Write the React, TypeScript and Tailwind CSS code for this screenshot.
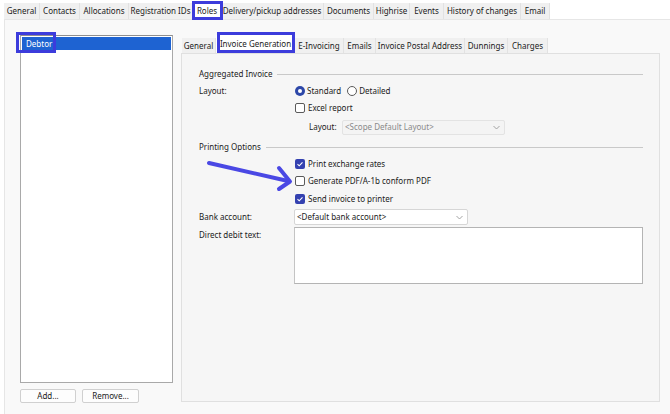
import React from "react";

const topTabs: { label: string; w: number; active?: boolean }[] = [
  { label: "General", w: 36 },
  { label: "Contacts", w: 40 },
  { label: "Allocations", w: 49 },
  { label: "Registration IDs", w: 64 },
  { label: "Roles", w: 28, active: true },
  { label: "Delivery/pickup addresses", w: 103 },
  { label: "Documents", w: 50 },
  { label: "Highrise", w: 36 },
  { label: "Events", w: 34 },
  { label: "History of changes", w: 77 },
  { label: "Email", w: 29 },
];

const innerTabs: { label: string; w: number; active?: boolean }[] = [
  { label: "General", w: 34 },
  { label: "Invoice Generation", w: 79, active: true },
  { label: "E-Invoicing", w: 49 },
  { label: "Emails", w: 32 },
  { label: "Invoice Postal Address", w: 89 },
  { label: "Dunnings", w: 43 },
  { label: "Charges", w: 40 },
];

const Chevron = () => (
  <svg width="7" height="5" viewBox="0 0 7 5" className="shrink-0">
    <polyline points="0.5,1 3.5,4 6.5,1" fill="none" stroke="#9a9a9a" strokeWidth="0.9" />
  </svg>
);

const Checkbox = ({ checked, label }: { checked?: boolean; label: string }) => (
  <div className="flex items-center gap-[3px]">
    {checked ? (
      <span className="w-[10px] h-[10px] rounded-[2px] bg-[#3441b0] flex items-center justify-center">
        <svg width="8" height="8" viewBox="0 0 8 8">
          <polyline points="1.5,4.2 3.2,5.8 6.5,2.3" fill="none" stroke="#fff" strokeWidth="1.1" />
        </svg>
      </span>
    ) : (
      <span className="w-[10px] h-[10px] rounded-[2px] border border-[#5a5a5a] bg-white" />
    )}
    <span>{label}</span>
  </div>
);

const Radio = ({ checked, label }: { checked?: boolean; label: string }) => (
  <div className="flex items-center gap-[2px]">
    {checked ? (
      <span className="w-[10px] h-[10px] rounded-full bg-[#2d47a8] flex items-center justify-center">
        <span className="w-[4px] h-[4px] rounded-full bg-white" />
      </span>
    ) : (
      <span className="w-[10px] h-[10px] rounded-full border border-[#5a5a5a] bg-white" />
    )}
    <span>{label}</span>
  </div>
);

const GroupHeader = ({ label }: { label: string }) => (
  <div className="flex items-center h-[16px]">
    <span>{label}</span>
    <span className="flex-1 h-px bg-[#c9c9c9] ml-[5px]" />
  </div>
);

export default function App() {
  return (
    <div
      className="relative w-[670px] h-[414px] overflow-hidden bg-white text-[8px] text-[#1b1b1b] leading-none"
      style={{ fontFamily: '"Noto Sans", "Open Sans", sans-serif' }}
    >
      {/* top tabs */}
      <div className="flex items-end h-[19px] pl-[4px]">
        {topTabs.map((t) => (
          <div
            key={t.label}
            style={{ width: t.w }}
            className={
              t.active
                ? "relative h-[17px] flex items-center justify-center bg-white"
                : "h-[16px] flex items-center justify-center bg-[#f0f0f0] border-r border-[#e2e2e2]"
            }
          >
            {t.label}
            {t.active && (
              <span className="absolute -left-[1px] -right-[2px] -top-[1px] -bottom-[1px] border-[3px] border-[#3c3cdc]" />
            )}
          </div>
        ))}
      </div>

      {/* main area */}
      <div className="ml-[4px] h-[395px] bg-[#f9f9f9] border-l border-t border-[#e6e6e6] flex">
        {/* left: roles list */}
        <div className="pl-[15px] pt-[15px] flex flex-col">
          <div className="w-[153px] h-[348px] bg-white border border-[#a9a9a9] border-t-[#8f8f8f] pt-px px-px">
            <div className="relative h-[13px] bg-[#1e63d2] text-white flex items-center pl-[4px]">
              Debtor
              <span className="absolute -left-[6px] -top-[5px] w-[40px] h-[21px] border-[3px] border-[#3c3cdc]" />
            </div>
          </div>
          <div className="flex gap-[6px] mt-[6px]">
            <button className="w-[56px] h-[14px] bg-[#fdfdfd] border border-[#d0d0d0] rounded-[2px] flex items-center justify-center">
              Add...
            </button>
            <button className="w-[57px] h-[14px] bg-[#fdfdfd] border border-[#d0d0d0] rounded-[2px] flex items-center justify-center">
              Remove...
            </button>
          </div>
        </div>

        {/* right: role detail */}
        <div className="ml-[8px] pt-[14px] flex flex-col">
          <div className="flex items-end h-[19px] pl-[1px]">
            {innerTabs.map((t) => (
              <div
                key={t.label}
                style={{ width: t.w }}
                className={
                  t.active
                    ? "relative h-[18px] flex items-center justify-center bg-white"
                    : "h-[15px] flex items-center justify-center bg-[#f0f0f0] border-r border-[#e2e2e2]"
                }
              >
                {t.label}
                {t.active && (
                  <span className="absolute left-[1px] right-[0px] -top-[3px] bottom-0 border-[3px] border-[#3c3cdc]" />
                )}
              </div>
            ))}
          </div>

          <div className="w-[479px] h-[349px] bg-[#f6f6f6] border border-[#e0e0e0] pl-[17px] pr-[16px] pt-[12px]">
            <GroupHeader label="Aggregated Invoice" />
            <div className="flex items-center h-[17px]">
              <span className="w-[96px]">Layout:</span>
              <div className="flex items-center gap-[6px]">
                <Radio checked label="Standard" />
                <Radio label="Detailed" />
              </div>
            </div>
            <div className="flex items-center h-[18px] pl-[96px]">
              <Checkbox label="Excel report" />
            </div>
            <div className="flex items-center h-[20px] pl-[110px]">
              <span className="w-[33px]">Layout:</span>
              <div className="w-[163px] h-[15px] bg-[#f4f4f4] border border-[#e3e3e3] rounded-[2px] flex items-center justify-between pl-[2px] pr-[4px] text-[#8a8a8a]">
                <span>&lt;Scope Default Layout&gt;</span>
                <Chevron />
              </div>
            </div>
            <div className="h-[2px]" />
            <GroupHeader label="Printing Options" />
            <div className="flex items-center h-[17px] pl-[96px] pt-px">
              <Checkbox checked label="Print exchange rates" />
            </div>
            <div className="flex items-center h-[18px] pl-[96px]">
              <Checkbox label="Generate PDF/A-1b conform PDF" />
            </div>
            <div className="flex items-center h-[18px] pl-[96px]">
              <Checkbox checked label="Send invoice to printer" />
            </div>
            <div className="flex items-center h-[18px]">
              <span className="w-[95px]">Bank account:</span>
              <div className="w-[174px] h-[16px] bg-white border border-[#d6d6d6] rounded-[2px] flex items-center justify-between pl-[2px] pr-[4px]">
                <span>&lt;Default bank account&gt;</span>
                <Chevron />
              </div>
            </div>
            <div className="flex mt-[1px]">
              <span className="w-[95px] pt-[4px]">Direct debit text:</span>
              <div className="flex-1 h-[57px] bg-white border border-[#b4b4b4] border-l-[#c4c4c4]" />
            </div>
          </div>
        </div>
      </div>

      {/* annotation arrow */}
      <svg className="absolute left-0 top-0 pointer-events-none" width="670" height="414">
        <g stroke="#4a48e4" strokeWidth="4" strokeLinecap="round" strokeLinejoin="round" fill="none">
          <line x1="209" y1="163" x2="288" y2="181" />
          <polyline points="279,168 290,181.5 279,189" />
        </g>
      </svg>
    </div>
  );
}
